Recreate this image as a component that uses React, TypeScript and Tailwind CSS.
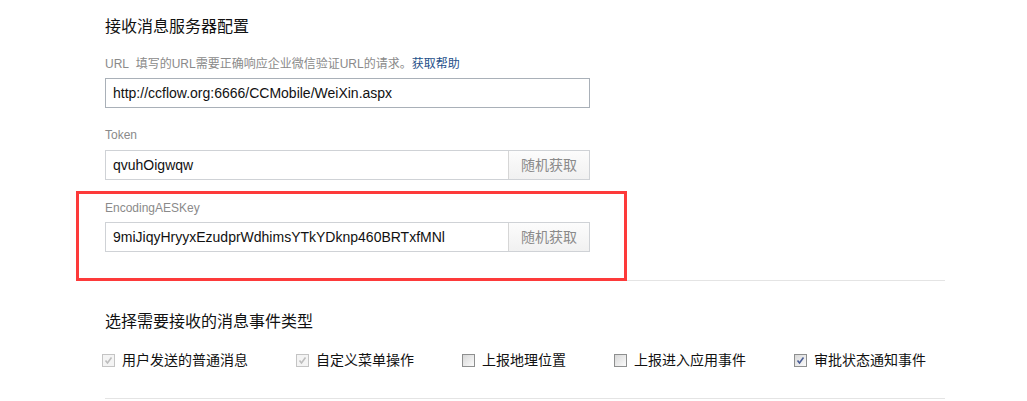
import React from "react";

const FONT = { fontFamily: '"Liberation Sans", Arial, "Noto Sans CJK SC", sans-serif' };

function Check({ state }: { state: "disabled" | "off" | "on" }) {
  const disabled = state === "disabled";
  return (
    <span
      className={
        "relative inline-block w-[13px] h-[13px] border shrink-0 " +
        (disabled
          ? "border-[#c4c4c4] bg-[#f4f4f4]"
          : "border-[#8e8f8f] bg-gradient-to-br from-[#d8d8d8] to-[#fbfbfb]")
      }
    >
      {state !== "off" && (
        <svg viewBox="0 0 11 11" className="absolute left-0 top-0 w-[11px] h-[11px]">
          <path
            d="M2.5 5.5 L4.5 8 L8.5 2.5"
            fill="none"
            stroke={disabled ? "#bdbdbd" : "#4b5e96"}
            strokeWidth="1.6"
          />
        </svg>
      )}
    </span>
  );
}

function Field({ value, button, dark }: { value: string; button?: boolean; dark?: boolean }) {
  return (
    <div
      className={
        "flex h-[30px] w-[485px] border bg-white " +
        (dark ? "border-[#a9b0b8]" : "border-[#cfd2d6]")
      }
    >
      <div className="flex-1 flex items-center pl-[7px] text-[14px] text-[#111]">{value}</div>
      {button && (
        <div className="w-[81px] flex items-center justify-center border-l border-[#d6d6d6] bg-gradient-to-b from-[#fcfcfc] to-[#f1f1f1] text-[14px] text-[#8a8a8a]">
          随机获取
        </div>
      )}
    </div>
  );
}

export default function App() {
  const items: { label: string; state: "disabled" | "off" | "on" }[] = [
    { label: "用户发送的普通消息", state: "disabled" },
    { label: "自定义菜单操作", state: "disabled" },
    { label: "上报地理位置", state: "off" },
    { label: "上报进入应用事件", state: "off" },
    { label: "审批状态通知事件", state: "on" },
  ];
  return (
    <div className="relative w-[1027px] h-[401px] bg-white overflow-hidden" style={FONT}>
      <div className="pl-[105px] w-[945px] flex flex-col">
        <div className="mt-[16px] h-[22px] leading-[22px] text-[16px] text-[#111]">接收消息服务器配置</div>
        <div className="mt-[18px] h-[16px] leading-[16px] text-[12px] text-[#8a8a8a]">
          URL&nbsp;&nbsp;填写的URL需要正确响应企业微信验证URL的请求。
          <span className="text-[#25508a]">获取帮助</span>
        </div>
        <div className="mt-[6px]">
          <Field value="http://ccflow.org:6666/CCMobile/WeiXin.aspx" dark />
        </div>
        <div className="mt-[19px] h-[16px] leading-[16px] text-[12px] text-[#8a8a8a]">Token</div>
        <div className="mt-[7px]">
          <Field value="qvuhOigwqw" button />
        </div>
        <div className="mt-[20px] h-[16px] leading-[16px] text-[12px] text-[#8a8a8a]">EncodingAESKey</div>
        <div className="mt-[6px]">
          <Field value="9miJiqyHryyxEzudprWdhimsYTkYDknp460BRTxfMNl" button />
        </div>
        <div className="mt-[28px] h-px w-[840px] bg-[#e4e4e4]" />
        <div className="mt-[30px] h-[22px] leading-[22px] text-[16px] text-[#111]">选择需要接收的消息事件类型</div>
        <div className="mt-[17px] h-[20px] flex items-center ml-[-3px] whitespace-nowrap">
          {items.map((it) => (
            <div key={it.label} className="flex items-center mr-[48px] shrink-0">
              <Check state={it.state} />
              <span className="ml-[7px] text-[14px] leading-[20px] text-[#111] whitespace-nowrap">{it.label}</span>
            </div>
          ))}
        </div>
        <div className="mt-[28px] h-px w-[840px] bg-[#e4e4e4]" />
      </div>
      <div className="absolute left-[76px] top-[191px] w-[551px] h-[90px] border-[3px] border-[#fd3a3a]" />
    </div>
  );
}
